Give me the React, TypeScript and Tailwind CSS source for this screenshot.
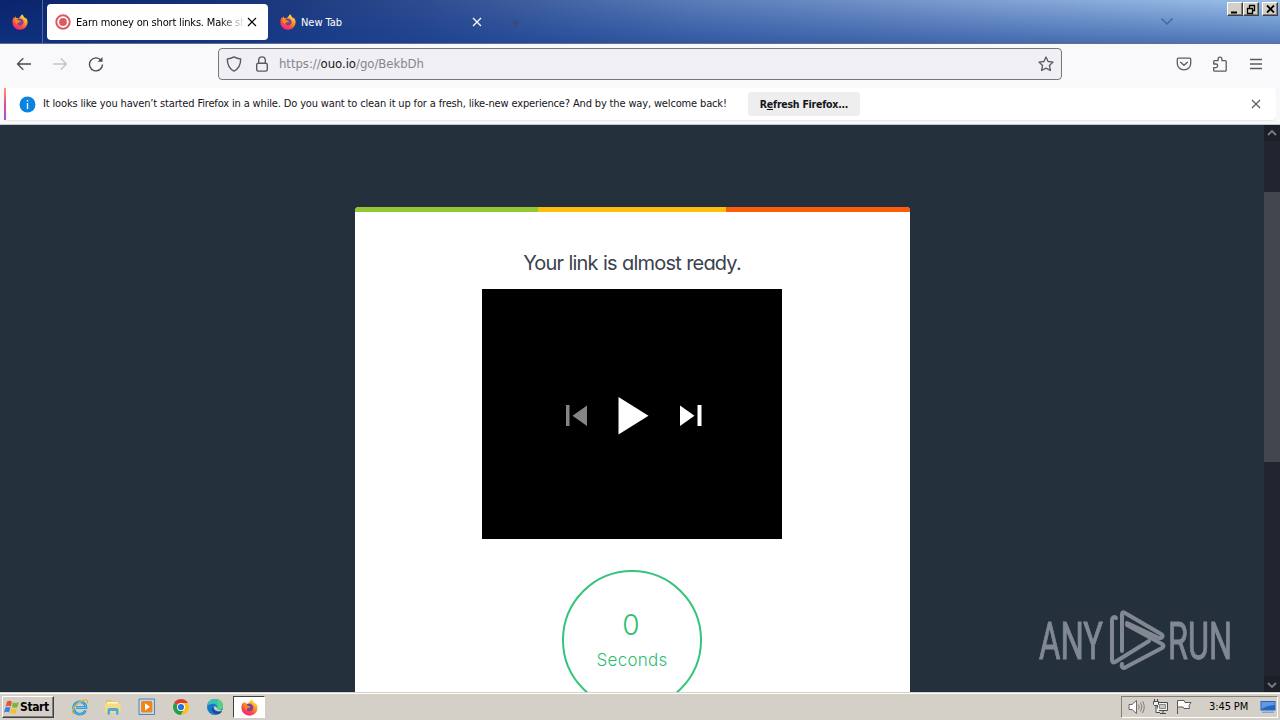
import React from "react";

const ui = "font-['DejaVu_Sans_Condensed','DejaVu_Sans',sans-serif] [font-stretch:condensed]";
const round = "font-[Inter,sans-serif] [font-feature-settings:'cv11'_1]";

function Firefox({ className }: { className: string }) {
  return (
    <svg viewBox="0 0 16 16" className={className}>
      <defs>
        <linearGradient id="fox" x1="0.85" y1="0.05" x2="0.25" y2="1">
          <stop offset="0" stopColor="#fff04a" />
          <stop offset="0.35" stopColor="#ffa021" />
          <stop offset="0.7" stopColor="#ff4548" />
          <stop offset="1" stopColor="#f0258c" />
        </linearGradient>
      </defs>
      <path d="M10 0.2c1.2 1 1.6 2 2 3 .7 0 1.600 1 1.700 1.500.2-.3.1-.8 0-1.200C15 5 15.700 6.800 15.600 8.600A7.600 7.300 0 0 1 .4 8.300C.3 6.300.9 4.500 2 3l.4 1.200L3.800 2.300l.5 1.900c.8-.2 1.600 0 2.300.3C7.600 2.700 9 2.200 10 .2z" fill="url(#fox)" />
      <path d="M5 5.700c1.200-1.700 4.700-1.600 6 .4 1.500 2.300.2 5.300-2.700 5.400-2.100.1-3.700-1.300-3.600-2.900.6.5 1.600.5 2.200 0 .7-.5 1.300-.5 1.800-.7.500-.6-.5-1.200-1.500-1.100-.7-.1-1.500-.4-2.200-1.100z" fill="#7a4398" />
      <path d="M2.500 4.600c1-.5 2.100-.3 3 .2l-.6 1.200 2.900.8c-.2 1-1.600 1-2.200 1.700-.4.600-.3 1.500.3 2.200C3.500 10.500 2.300 7.500 2.500 4.600z" fill="#ff8a1c" />
    </svg>
  );
}

function Cross({ className }: { className: string }) {
  return (
    <svg viewBox="0 0 10 10" className={className} fill="none" stroke="currentColor" strokeWidth="1.200">
      <path d="M1 1l8 8M9 1L1 9" />
    </svg>
  );
}

function TabStrip() {
  return (
    <div className="relative flex h-11 shrink-0 border-b border-[#686e80] bg-[linear-gradient(to_bottom,rgba(16,52,136,0),rgba(16,58,144,0.55)),linear-gradient(100deg,#0b246b_0%,#173278_18%,#2e4c90_33%,#5a7cb8_54%,#7c9dd0_75%,#9bc2ea_100%)]">
      <div className="flex w-[43px] items-center justify-center border-r border-[#5266a0] pr-0.5">
        <Firefox className="mt-px size-4" />
      </div>
      <div className="mt-1 ml-1 flex h-9 w-[221px] items-center rounded bg-white pl-2">
        <svg viewBox="0 0 16 16" className="size-4">
          <circle cx="8" cy="8" r="6.700" fill="#fff" stroke="#dc5b60" strokeWidth="2" />
          <circle cx="8" cy="8" r="3.900" fill="#dc5b60" />
        </svg>
        <div className={`${ui} mt-0.5 ml-[5px] w-[168px] overflow-hidden text-[11px] leading-4 whitespace-nowrap text-black tracking-[-0.18px] [mask-image:linear-gradient(to_right,#000_143px,transparent_170px)]`}>
          Earn money on short links. Make sh
        </div>
        <Cross className="ml-[3px] size-[10px] text-black" />
      </div>
      <div className="ml-3 flex h-full w-[202px] items-center text-white">
        <Firefox className="mt-px size-4" />
        <span className={`${ui} mt-[3px] ml-[5px] flex-1 text-[11px] leading-4 tracking-[-0.05px]`}>New Tab</span>
        <Cross className="size-[10px]" />
      </div>
      <svg viewBox="0 0 10 10" className="mt-[18px] ml-7 size-[10px]" stroke="#3f4964" strokeWidth="1.200">
        <path d="M5 1v8M1 5h8" />
      </svg>
      <svg viewBox="0 0 14 9" className="mt-[17px] mr-[10px] ml-auto h-[9px] w-[14px]" fill="none" stroke="#4c6591" strokeWidth="1.500">
        <path d="M1.500 1.500L7 7l5.500-5.500" />
      </svg>
      <div className="mt-0.5 mr-0.5 ml-[43px] flex h-[14px]">
        <WinButton><path d="M3 9.500h6" strokeWidth="2" /></WinButton>
        <WinButton>
          <path d="M5 2.500h6M5.500 2v3M10.500 2v5.500H9M3 5.500h6M3.500 5v5.500h5V5" strokeWidth="1.300" />
        </WinButton>
        <div className="w-[3px]" />
        <WinButton><path d="M4 2.500l7 7M11 2.500l-7 7" strokeWidth="1.800" /></WinButton>
      </div>
    </div>
  );
}

function WinButton({ children }: { children: React.ReactNode }) {
  return (
    <div className="h-[14px] w-4 border border-t-white border-r-[#404040] border-b-[#404040] border-l-white bg-[#d4d0c8] shadow-[inset_-1px_-1px_0_#808080]">
      <svg viewBox="0 0 14 12" className="h-3 w-[14px]" fill="none" stroke="#000">{children}</svg>
    </div>
  );
}

function Toolbar() {
  return (
    <div className="flex h-11 shrink-0 items-center bg-[#f9f9fb] pb-1 text-[#5b5b66]">
      <svg viewBox="0 0 16 16" className="ml-4 size-4" fill="none" stroke="#4a4a54" strokeWidth="1.300">
        <path d="M15 8H1.500M7.300 2.300L1.500 8l5.800 5.700" />
      </svg>
      <svg viewBox="0 0 16 16" className="ml-5 size-4" fill="none" stroke="#c3c3c8" strokeWidth="1.300">
        <path d="M1 8h13.500M8.700 2.300L14.500 8l-5.800 5.700" />
      </svg>
      <svg viewBox="0 0 16 16" className="ml-5 size-4" fill="none" stroke="#4a4a54" strokeWidth="1.400">
        <path d="M13 4.200A6.500 6.500 0 1 0 14.500 8.500" />
        <path d="M14.500 1v4.800H9.700z" fill="#4a4a54" stroke="none" />
      </svg>
      <div className="ml-[114px] flex h-8 w-[844px] items-center rounded border border-[#76767f] bg-[#f0f0f4]">
        <svg viewBox="0 0 16 16" className="ml-[7px] size-4" fill="none" stroke="currentColor" strokeWidth="1.400" strokeLinejoin="round">
          <path d="M8 .9c2 1.200 4.200 1.900 6.700 2.100 0 5.500-1.500 9.600-6.700 12.100C2.800 12.600 1.300 8.500 1.300 3 3.800 2.800 6 2.100 8 .9z" />
        </svg>
        <svg viewBox="0 0 16 16" className="ml-3 size-4" fill="none" stroke="currentColor" strokeWidth="1.400">
          <rect x="2.700" y="7.200" width="10.600" height="7.900" rx="1.500" />
          <path d="M4.700 7V4.200a3.300 3.300 0 0 1 6.600 0V7" />
        </svg>
        <div className={`${ui} ml-[9px] flex-1 text-[13px] leading-4 tracking-[-0.04px] text-[#85858d]`}>
          https://<span className="text-[#15141a]">ouo.io</span>/go/BekbDh
        </div>
        <svg viewBox="0 0 16 16" className="mr-[7px] size-4" fill="none" stroke="currentColor" strokeWidth="1.300" strokeLinejoin="round">
          <path d="M8 1l2.100 4.500 5 .6-3.700 3.400 1 5L8 12.100l-4.400 2.400 1-5L.9 6.100l5-.6z" />
        </svg>
      </div>
      <svg viewBox="0 0 16 16" className="ml-[114px] size-4" fill="none" stroke="currentColor" strokeWidth="1.300" strokeLinejoin="round">
        <path d="M2.500 2.200h11a1.200 1.200 0 0 1 1.200 1.200v4.200a6.700 6.200 0 0 1-13.400 0V3.400a1.200 1.200 0 0 1 1.200-1.200z" />
        <path d="M4.600 6.200L8 9.300l3.400-3.100" strokeLinecap="round" />
      </svg>
      <svg viewBox="0 0 16 16" className="ml-5 size-4" fill="none" stroke="currentColor" strokeWidth="1.300" strokeLinejoin="round">
        <path d="M2.700 15.200h10.500a1 1 0 0 0 1-1V5.600a1 1 0 0 0-1-1h-3.300V3a1.900 1.900 0 0 0-3.800 0v1.600H2.700a1 1 0 0 0-1 1V8h2.200a1.700 1.700 0 0 1 0 3.600H1.700v2.600a1 1 0 0 0 1 1z" />
      </svg>
      <svg viewBox="0 0 16 16" className="ml-5 size-4" stroke="currentColor" strokeWidth="1.300">
        <path d="M2 3.500h12M2 8h12M2 12.500h12" />
      </svg>
    </div>
  );
}

function Notice() {
  return (
    <div className="h-[37px] shrink-0 border-b border-[#c6c9d0] bg-[#f7f8fa] pr-1 pl-1">
      <div className="flex h-8 items-center rounded-sm bg-white shadow-[0_1px_1px_rgba(58,57,68,0.08)]">
        <div className="h-8 w-0.5 bg-[linear-gradient(#ff9a66,#e44a9a_50%,#a04fd6)]" />
        <svg viewBox="0 0 16 16" className="ml-[13px] size-[17px]">
          <circle cx="8" cy="8" r="7.500" fill="#0a84e0" />
          <path d="M8 3.700v1.500M8 6.700v5.500" stroke="#fff" strokeWidth="1.300" />
        </svg>
        <span className={`${ui} ml-[7px] w-[705px] text-[11px] leading-4 tracking-[-0.15px] whitespace-nowrap text-[#15141a]`}>
          It looks like you haven’t started Firefox in a while. Do you want to clean it up for a fresh, like-new experience? And by the way, welcome back!
        </span>
        <button className={`${ui} flex h-6 w-28 items-center justify-center rounded bg-[#eeeeef] pt-0.5 text-[10.500px] font-bold tracking-[-0.24px] text-[#15141a]`}>
          <span>R<u>e</u>fresh Firefox...</span>
        </button>
        <Cross className="mr-[15px] ml-auto size-[10px] text-[#5b5b66]" />
      </div>
    </div>
  );
}

function Watermark() {
  return (
    <svg viewBox="0 0 200 70" className="absolute right-10 bottom-4 h-[70px] w-[200px] overflow-visible opacity-90">
      <g fill="#8b929b" stroke="#8b929b" fontFamily="Roboto, sans-serif" fontSize="52" fontWeight="400">
        <text x="-1" y="53" strokeWidth="1" textLength="64" lengthAdjust="spacingAndGlyphs">ANY</text>
        <text x="128" y="53" strokeWidth="1" textLength="64" lengthAdjust="spacingAndGlyphs">RUN</text>
      </g>
      <g fill="none" stroke="#8b929b" strokeWidth="4" strokeLinejoin="round" strokeLinecap="round">
        <path d="M76 12c-2-2-4 0-4 2v40c0 2 1 3 3 2l34-21" />
        <path d="M82 45V8c0-2 1-2 3-1l36 21c3 2 1 5-2 4L87 17" />
        <path d="M87 19L122 38q3 2 0 4L86 61c-3 2-5 0-4-3" />
      </g>
    </svg>
  );
}

function Page() {
  return (
    <div className="relative flex h-[567px] shrink-0 overflow-hidden bg-[#25303d]">
      <main className="flex flex-1 justify-center">
        <section className="mt-[82px] flex h-[600px] w-[555px] flex-col items-center overflow-hidden rounded-t bg-white">
          <div className="flex h-[5px] w-full shrink-0">
            <div className="w-[183px] bg-[#94c832]" />
            <div className="w-[188px] bg-[#ffbe0c]" />
            <div className="flex-1 bg-[#fd5d08]" />
          </div>
          <h1 className={`${round} mt-[37px] text-[20px] leading-7 tracking-[-0.82px] whitespace-nowrap text-[#3a424d] [word-spacing:0.5px]`}>Your link is almost ready.</h1>
          <div className="mt-[12px] flex h-[250px] w-[300px] shrink-0 items-center justify-center bg-black">
            <svg viewBox="0 0 140 40" className="mt-[3px] ml-[3px] h-10 w-[140px]" fill="#fff">
              <path d="M2 9h3.500v21H2zM23 9.500v20.500L8.500 19.800z" fill="#858585" />
              <path d="M54.500 1v37.500l30-18.700zM116 9.500V30l14.500-10.300zM133.500 9h4v21h-4z" />
            </svg>
          </div>
          <div className="mt-[31px] flex size-[140px] shrink-0 flex-col items-center rounded-full border-2 border-[#36c47b] pr-0.5 text-[#2fbd72]">
            <span className={`${round} mt-[37px] text-[28px] leading-8 font-light`}>0</span>
            <span className={`${round} mt-[9px] ml-0.5 text-[17px] leading-5 font-light tracking-[0.25px]`}>Seconds</span>
          </div>
        </section>
      </main>
      <div className="flex w-4 flex-col bg-[#22252f]">
        <svg viewBox="0 0 16 16" className="size-4 shrink-0 bg-[#1c1f28]" fill="none" stroke="#7a7d84" strokeWidth="1.800"><path d="M4 10l4-4 4 4" /></svg>
        <div className="mt-[51px] h-[270px] w-4 bg-[#43464f]" />
        <svg viewBox="0 0 16 16" className="mt-auto size-4 shrink-0 bg-[#1c1f28]" fill="none" stroke="#7a7d84" strokeWidth="1.800"><path d="M4 7l4 4 4-4" /></svg>
      </div>
      <Watermark />
    </div>
  );
}

function Taskbar() {
  return (
    <footer className="flex h-7 shrink-0 items-center border-t border-[#d4d0c8] bg-[#d4d0c8] pt-px shadow-[inset_0_1px_0_#fff]">
      <button className="ml-0.5 flex h-[22px] w-[52px] items-center border border-t-white border-r-[#404040] border-b-[#404040] border-l-white pl-px shadow-[inset_-1px_-1px_0_#808080]">
        <svg viewBox="0 0 16 16" className="size-4 shrink-0">
          <path d="M3 2.500c2-1 3.500-.8 5 .2L6.800 7.500c-1.600-1-3.200-1-5 0z" fill="#e8562a" />
          <path d="M9 3.200c1.800 1 3.800 1 6-.2l-1.500 5c-2 1-3.800.9-5.700-.1z" fill="#7bb63a" />
          <path d="M1.400 8.600c1.800-.9 3.500-.9 5 .1L5 13.500c-1.500-1-3-1-5-.1z" fill="#3b82d8" />
          <path d="M7.500 9.200c1.700 1 3.700 1 5.700.1l-1.500 4.900c-2 .9-3.800.9-5.600-.2z" fill="#f6c22c" />
        </svg>
        <span className={`${ui} text-[12px] font-bold tracking-[-0.4px] text-black`}>Start</span>
      </button>
      <svg viewBox="0 0 18 18" className="ml-[17px] size-[18px]" fill="none">
        <path d="M14.500 12.500A6.200 6.200 0 1 1 15 9.500H5" stroke="#1d8fd3" strokeWidth="2.600" />
        <path d="M14.500 12.500A6.200 6.200 0 1 1 15 9.500H5" stroke="#6ccbf3" strokeWidth="0.900" />
        <path d="M3.500 15.500C-1 16 2 8.500 8 4.500S18 1 16 5.500" stroke="#e5b436" strokeWidth="1.300" />
      </svg>
      <svg viewBox="0 0 18 18" className="ml-[15px] size-[18px]">
        <path d="M2 2h5l1 1.500h7V8H2z" fill="#e7c45c" />
        <path d="M3 4h11v5H3z" fill="#fff7cf" />
        <path d="M1 5.500h15.500V15H1z" fill="#f3dc85" />
        <path d="M3.500 16.500V12q0-2 2-2h7q2 0 2 2v4.500H12V13H6v3.500z" fill="#4fa9dc" />
      </svg>
      <svg viewBox="0 0 18 18" className="ml-4 size-[18px]">
        <path d="M1 1h15.500v15.500H1z" fill="#b9d7ef" stroke="#4e86bd" />
        <path d="M2.500 3h12.500v11.500H2.500z" fill="#e4edf4" />
        <path d="M4.500 3h8.500q1.500 0 1.500 1.500v8.500q0 1.500-1.500 1.500H4.500Q3 14.500 3 13V4.500Q3 3 4.500 3z" fill="#f28418" />
        <path d="M7 5.200v7.200l5-3.600z" fill="#fff" />
      </svg>
      <svg viewBox="0 0 18 18" className="ml-4 size-[18px]">
        <path d="M9 9L2.100 5A8 8 0 0 1 15.900 5z" fill="#e33b2e" />
        <path d="M9 9L2.100 5A8 8 0 0 0 9 17l3-6z" fill="#24a148" />
        <path d="M9 5h6.900A8 8 0 0 1 9 17l3.500-6z" fill="#fbc116" />
        <circle cx="9" cy="9" r="4" fill="#fff" />
        <circle cx="9" cy="9" r="3.100" fill="#2b6fdd" />
      </svg>
      <svg viewBox="0 0 18 18" className="ml-4 size-[18px]">
        <circle cx="9" cy="9" r="8" fill="#1976c9" />
        <path d="M1 8.500C1.500 3.500 5 1 9 1c5 0 8 3.300 8 7 0 2.500-2 4-4.200 4-2 0-2.300-1-1.800-1.700C12 8 10 5.800 7 5.800 4.500 5.800 2 7 1 8.500z" fill="#36c2b4" />
        <path d="M11 1.300c3.500.9 6 3.500 6 6.700 0 2.500-2 4-4.200 4-2 0-2.300-1-1.800-1.700 1.500-2 1-6 0-9z" fill="#59d17b" />
        <path d="M6.500 8.500c-2 3 .5 8 6 7.500 1.500-.2 2.700-1.200 3.500-2.700-3.500 1.500-8.500.5-9.500-4.800z" fill="#164c92" />
        <path d="M8 8.500c-.5 2.500 1.500 4.700 5 4.700l3.500-.8V17H18v-6c-1.500 1.600-7 1.800-7-.2.3-1-.7-2.900-3-2.300z" fill="#d4d0c8" />
      </svg>
      <div className="ml-[9px] flex h-[22px] w-8 items-center justify-center border border-t-[#404040] border-r-white border-b-white border-l-[#404040] bg-white">
        <Firefox className="size-[17px]" />
      </div>
      <div className="mr-0.5 ml-auto flex h-[22px] w-[157px] items-center border border-t-[#808080] border-r-white border-b-white border-l-[#808080] pl-[6px]">
        <svg viewBox="0 0 17 16" className="h-4 w-[17px]" fill="#fff" stroke="#686868">
          <path d="M1 5.500h3L8.500 1.500v13L4 10.500H1z" />
          <path d="M10.500 5.500q1.500 2.500 0 5M12.500 3.500q3 4.500 0 9M14.500 2q3.500 6 0 12" fill="none" strokeWidth="0.800" />
        </svg>
        <svg viewBox="0 0 17 16" className="ml-[7px] h-4 w-[17px]" fill="#f2f2f0" stroke="#4c4c4c">
          <path d="M5.500 3.500h10v8h-10zM8 14.500h6M11 12v2.500" />
          <path d="M7.500 5.500h6v4h-6z" fill="#c9c7c0" stroke="#8a8a86" />
          <path d="M1.500 2.500h5v3l-1 1h-3l-1-1zM2.500 0v2.500M5.500 0v2.500M4 6.500v7h4" />
        </svg>
        <svg viewBox="0 0 17 16" className="ml-[7px] h-4 w-[17px]" fill="#fff" stroke="#5a5a5a">
          <path d="M1.500 15V1.500h6.500l1 2h6l-2 3 .5 3H8l-1-1.500H2" />
        </svg>
        <span className={`${ui} mt-px ml-[16px] w-[42px] text-[11px] tracking-[-0.1px] whitespace-nowrap text-black`}>3:45 PM</span>
        <svg viewBox="0 0 16 14" className="ml-[9px] h-[14px] w-4">
          <path d="M.5 1h15v9.500H.5z" fill="#2467bd" />
          <path d="M1.500 2h13v3q-7 0-13 4z" fill="#5e9be4" />
          <path d="M2 11.500h12v1.500H2z" fill="#79a9da" />
        </svg>
      </div>
    </footer>
  );
}

export default function App() {
  return (
    <div className="flex h-[720px] w-[1280px] flex-col overflow-hidden">
      <TabStrip />
      <Toolbar />
      <Notice />
      <Page />
      <Taskbar />
    </div>
  );
}
